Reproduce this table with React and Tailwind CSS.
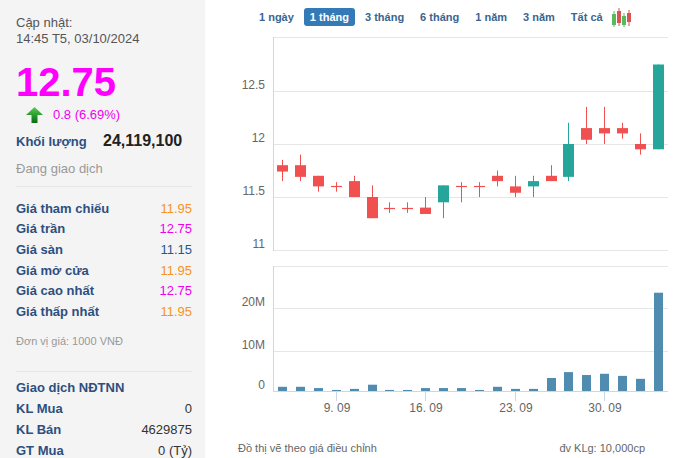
const tabs = ['1 ngày', '1 tháng', '3 tháng', '6 tháng', '1 năm', '3 năm', 'Tất cả'];

// open, close, high, low
const candles = [
  [11.8, 11.74, 11.85, 11.65],
  [11.8, 11.69, 11.9, 11.65],
  [11.7, 11.6, 11.7, 11.55],
  [11.6, 11.6, 11.64, 11.55],
  [11.65, 11.5, 11.7, 11.5],
  [11.5, 11.3, 11.61, 11.3],
  [11.4, 11.4, 11.45, 11.35],
  [11.4, 11.4, 11.45, 11.35],
  [11.4, 11.34, 11.5, 11.34],
  [11.45, 11.61, 11.61, 11.3],
  [11.6, 11.6, 11.64, 11.45],
  [11.6, 11.6, 11.64, 11.5],
  [11.7, 11.65, 11.75, 11.6],
  [11.6, 11.54, 11.7, 11.5],
  [11.6, 11.65, 11.7, 11.5],
  [11.7, 11.65, 11.8, 11.65],
  [11.69, 12.0, 12.2, 11.65],
  [12.15, 12.04, 12.35, 12.0],
  [12.15, 12.1, 12.35, 12.0],
  [12.15, 12.1, 12.2, 12.05],
  [12.0, 11.95, 12.1, 11.9],
  [11.95, 12.75, 12.75, 11.95],
];

const vols = [1, 1, 0.7, 0.25, 0.5, 1.5, 0.25, 0.25, 0.7, 0.7, 0.7, 0.25, 1, 0.5, 0.5, 3.1, 4.5, 3.8, 4.1, 3.6, 2.9, 23.4];

const priceRows = [
  ['Giá tham chiếu', '11.95', 'text-[#f7931e]'],
  ['Giá trần', '12.75', 'text-[#ee00ee]'],
  ['Giá sàn', '11.15', 'text-[#1f5a8c]'],
  ['Giá mở cửa', '11.95', 'text-[#f7931e]'],
  ['Giá cao nhất', '12.75', 'text-[#ee00ee]'],
  ['Giá thấp nhất', '11.95', 'text-[#f7931e]'],
];

const foreignRows = [
  ['KL Mua', '0'],
  ['KL Bán', '4629875'],
  ['GT Mua', '0 (Tỷ)'],
];

const RED = '#f0504f';
const GREEN = '#26a69a';
const GRID = '#e6e6e6';
const AXIS = '#ccd6eb';

const py = p => 216 - (p - 11) * 106;
const vy = v => 357 - v * 4.2;
const cx = i => Math.round(77 + i * 17.9);

function UpArrow() {
  return (
    <svg width="17" height="16" viewBox="0 0 17 16">
      <defs>
        <linearGradient id="ga" x1="0" y1="0" x2="0" y2="1">
          <stop offset="0" stopColor="#4fd04f" />
          <stop offset="1" stopColor="#0b6b12" />
        </linearGradient>
      </defs>
      <polygon points="8.5,0 17,8 11.5,8 11.5,16 5.5,16 5.5,8 0,8" fill="url(#ga)" />
    </svg>
  );
}

function CandleIcon() {
  const c = [
    [2, 6, 9, 20, 23, '#5cb85c'],
    [7, 3, 6, 18, 21, '#d9534f'],
    [12, 8, 11, 20, 23, '#5cb85c'],
    [17, 5, 8, 17, 21, '#d9534f'],
  ];
  return (
    <svg width="22" height="22" viewBox="0 0 22 22">
      {c.map(([x, h, t, b, l, col], i) => (
        <g key={i}>
          <line x1={x + 2} x2={x + 2} y1={h} y2={l} stroke={col} strokeWidth="1" />
          <rect x={x} y={t} width="4" height={b - t} fill={col} />
        </g>
      ))}
    </svg>
  );
}

function Chart() {
  const priceGrid = [[57, '12.5'], [110, '12'], [163, '11.5'], [216, '11']];
  const volGrid = [[274, '20M'], [317, '10M']];
  const ticks = [[3, '9. 09'], [8, '16. 09'], [13, '23. 09'], [18, '30. 09']];
  return (
    <svg width="470" height="390" viewBox="0 0 470 390" fontFamily="'Liberation Sans', Arial, sans-serif">
      <line x1="68" x2="463" y1="3.5" y2="3.5" stroke={GRID} />
      {priceGrid.map(([y, t]) => (
        <g key={t}>
          <line x1="68" x2="463" y1={y + 0.5} y2={y + 0.5} stroke={GRID} />
          <text x="60" y={y - 2} textAnchor="end" fontSize="12" fill="#666">{t}</text>
        </g>
      ))}
      <line x1="68.5" x2="68.5" y1="3" y2="217" stroke={AXIS} />

      {candles.map(([o, c, h, l], i) => {
        const x = cx(i);
        const col = c > o ? GREEN : RED;
        const top = py(Math.max(o, c));
        const bot = py(Math.min(o, c));
        const doji = Math.abs(o - c) < 0.005;
        return (
          <g key={i}>
            <line x1={x + 0.5} x2={x + 0.5} y1={py(h)} y2={py(l)} stroke={col} strokeWidth="1" />
            {doji ? (
              <line x1={x - 5} x2={x + 6} y1={Math.round(top) + 0.5} y2={Math.round(top) + 0.5} stroke={col} strokeWidth="1.2" />
            ) : (
              <rect x={x - 5} y={top} width="11" height={Math.max(2, bot - top)} fill={col} />
            )}
          </g>
        );
      })}

      <line x1="68" x2="463" y1="232.5" y2="232.5" stroke={GRID} />
      {volGrid.map(([y, t]) => (
        <g key={t}>
          <line x1="68" x2="463" y1={y + 0.5} y2={y + 0.5} stroke={GRID} />
          <text x="60" y={y - 2} textAnchor="end" fontSize="12" fill="#666">{t}</text>
        </g>
      ))}
      <text x="60" y="355" textAnchor="end" fontSize="12" fill="#666">0</text>
      <line x1="68.5" x2="68.5" y1="232" y2="357" stroke={AXIS} />

      {vols.map((v, i) => (
        <rect key={i} x={cx(i) - 4} y={vy(v)} width="9" height={357 - vy(v)} fill="#4f8cb0" />
      ))}
      <line x1="68" x2="463" y1="357.5" y2="357.5" stroke={AXIS} />

      {ticks.map(([i, t]) => (
        <g key={t}>
          <line x1={cx(i) + 0.5} x2={cx(i) + 0.5} y1="358" y2="367" stroke={AXIS} />
          <text x={cx(i) + 1} y="378" textAnchor="middle" fontSize="12" fill="#666">{t}</text>
        </g>
      ))}
    </svg>
  );
}

export default function App() {
  return (
    <div className="w-[675px] h-[458px] flex overflow-hidden bg-white font-['Liberation_Sans',Arial,sans-serif]">
      <div className="w-[205px] shrink-0 bg-[#f4f4f4] pl-4 pr-[13px] pt-[15px]">
        <div className="text-[13px] leading-[16px] text-[#555]">
          <div>Cập nhật:</div>
          <div>14:45 T5, 03/10/2024</div>
        </div>
        <div className="mt-[12px] text-[40px] leading-[46px] font-bold text-[#ff00ff]">12.75</div>
        <div className="mt-[1px] h-[18px] flex items-center">
          <div className="ml-[10px] w-[27px]"><UpArrow /></div>
          <span className="text-[13px] text-[#ee00ee]">0.8 (6.69%)</span>
        </div>
        <div className="mt-[7px] h-[20px] flex items-center">
          <span className="w-[87px] text-[13px] font-bold text-[#2d4f7f] mt-[2px]">Khối lượng</span>
          <span className="text-[16px] font-bold text-[#222]">24,119,100</span>
        </div>
        <div className="mt-[9px] text-[13px] leading-[18px] text-[#999]">Đang giao dịch</div>
        <div className="mt-[8px] border-t border-[#e6e6e6]" />

        <div className="mt-[11px]">
          {priceRows.map(([label, value, color]) => (
            <div key={label} className="h-[20.7px] flex items-center justify-between text-[13px]">
              <span className="font-bold text-[#2d4f7f]">{label}</span>
              <span className={color}>{value}</span>
            </div>
          ))}
        </div>
        <div className="mt-[12px] text-[11px] leading-[14px] text-[#999]">Đơn vị giá: 1000 VNĐ</div>
        <div className="mt-[23px] border-t border-[#e6e6e6]" />

        <div className="mt-[5px] text-[13px]">
          <div className="h-[21px] flex items-center font-bold text-[#2d4f7f]">Giao dịch NĐTNN</div>
          {foreignRows.map(([label, value]) => (
            <div key={label} className="h-[21px] flex items-center justify-between">
              <span className="font-bold text-[#2d4f7f]">{label}</span>
              <span className="text-[#333]">{value}</span>
            </div>
          ))}
        </div>
      </div>

      <div className="flex-1 flex flex-col">
        <div className="h-[34px] pt-[8px] pl-[48px] flex items-start gap-[4px]">
          {tabs.map(t => (
            <div
              key={t}
              className={`h-[18px] px-[6px] leading-[18px] text-[11px] font-bold rounded-[3px] ${t === '1 tháng' ? 'bg-[#337ab7] text-white' : 'text-[#3a6590]'}`}
            >
              {t}
            </div>
          ))}
          <div className="-ml-[3px] -mt-[3px]"><CandleIcon /></div>
        </div>
        <Chart />
        <div className="flex justify-between pl-[33px] pr-[30px] pt-[17px] text-[11px] leading-[14px] text-[#666]">
          <span>Đồ thị vẽ theo giá điều chỉnh</span>
          <span>đv KLg: 10,000cp</span>
        </div>
      </div>
    </div>
  );
}
